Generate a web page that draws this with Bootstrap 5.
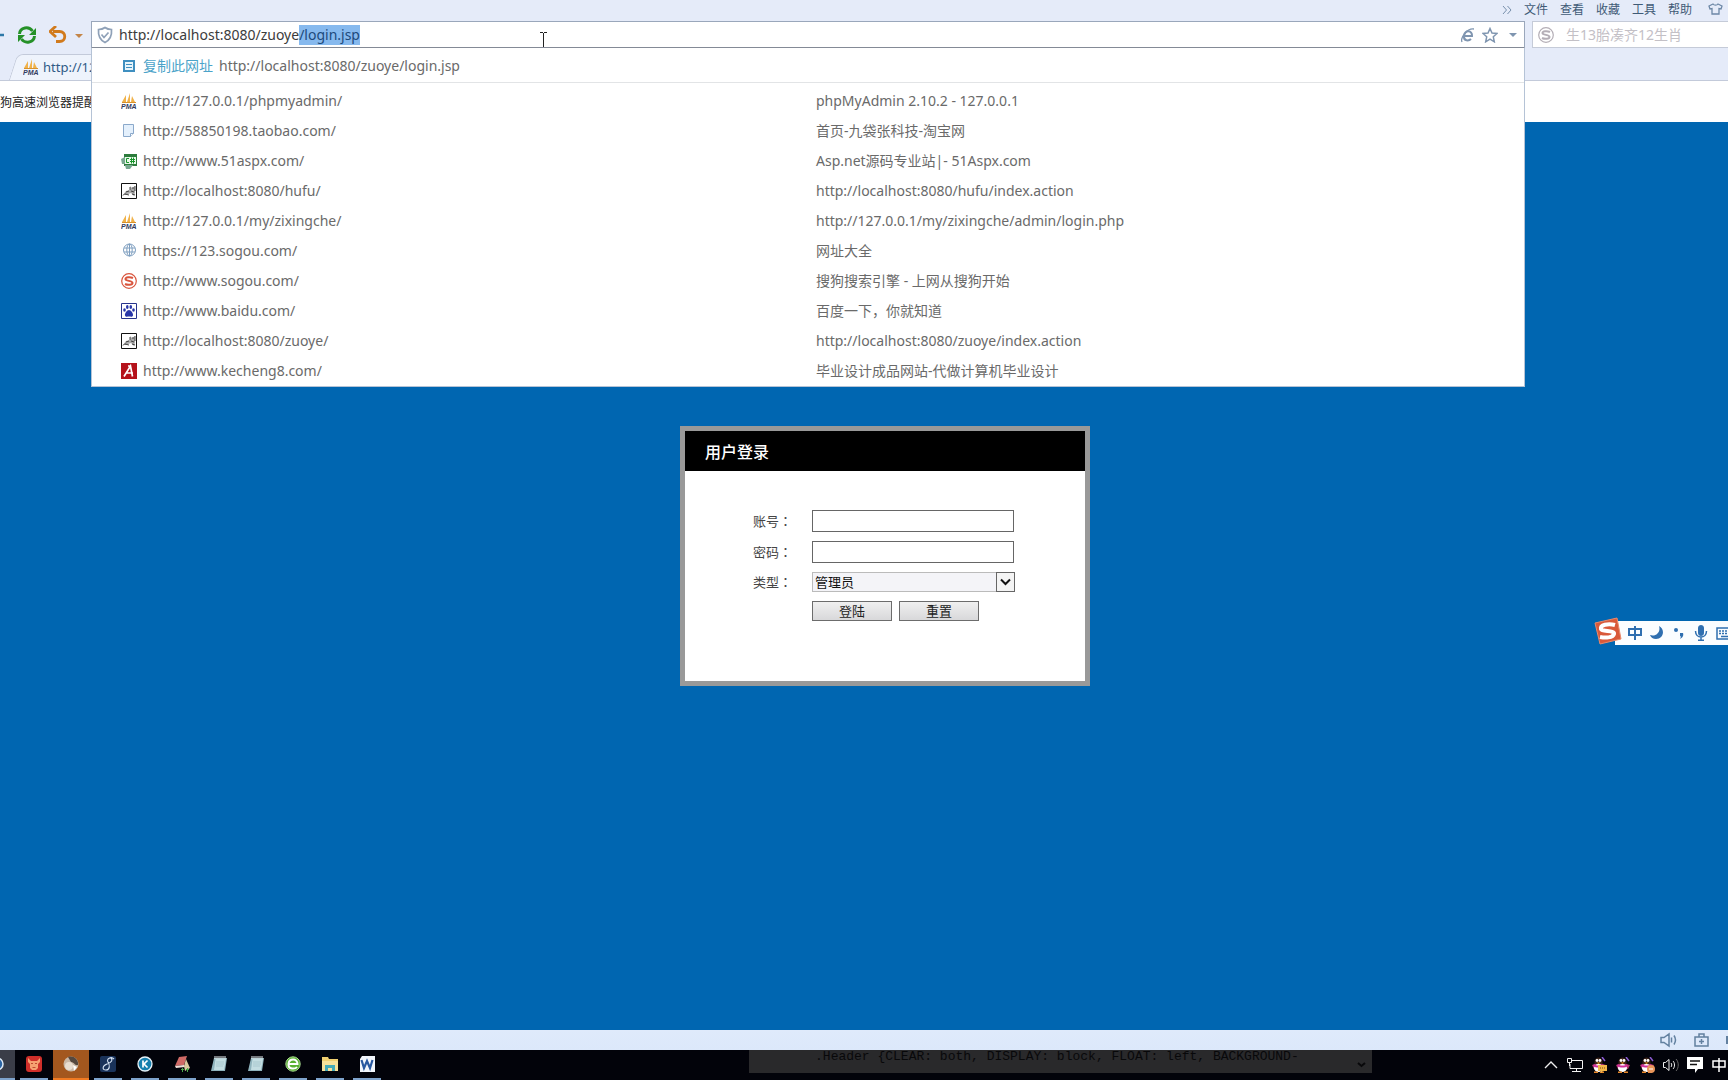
<!DOCTYPE html>
<html lang="zh-CN">
<head>
<meta charset="utf-8">
<title>用户登录</title>
<meta name="viewport" content="width=device-width, initial-scale=1">
<link href="https://cdn.jsdelivr.net/npm/bootstrap@5.3.0/dist/css/bootstrap.min.css" rel="stylesheet">
<style>
body{font-family:"Noto Sans","Noto Sans CJK SC",sans-serif;font-size:14px;line-height:20px;color:#6a6a6a;height:100vh;overflow:hidden;background:#0066b1}
svg{display:block;flex:none}
.chrome{background:#e5ebf9}
.menubar{height:21px;font-size:12px;line-height:20px;gap:12px;padding-right:5px}
.menubar a{color:#3f5a76;text-decoration:none}
.toolrow{height:27px}
.navbtns{width:91px}
.plain{border:0;background:none;padding:0}
.omnibox{background:#fff;border:1px solid #9aa7bb;border-bottom-color:#848a96;height:27px;margin-right:7px}
.url{color:#3c3c3c;white-space:pre;padding-left:5px}
.url span{background:#86b9ee;color:#1d4a7c;display:inline-block}
.findbox{width:196px;background:#fff;border:1px solid #c5cbd8;border-right:0;padding-left:5px}
.findbox input{border:0;background:none;outline:0;padding:0;width:150px;color:#bbb}
.findbox input::placeholder{color:#c3c0c6;opacity:1}
.suggest{position:absolute;top:100%;left:-1px;right:-1px;background:#fff;border:1px solid #b5c3d6;border-top:1px solid #848a96;z-index:5;height:340px}
.suggest a{color:#6a6a6a;text-decoration:none;height:30px;padding-left:29px}
.suggest .copyrow{height:35px;border-bottom:1px solid #e2e4e6;margin-bottom:3px;padding-top:2px;padding-left:30px}
.suggest .addr{width:695px;gap:6px;flex:none}
.copyrow b{color:#4ba3c9;font-weight:400;margin-right:6px}
.copyrow svg{margin-right:7px}
.tabrow{height:33px;border-bottom:1px solid #c3cada;padding-left:13px}
.tabitem{position:relative;z-index:0;height:26px;width:160px;padding-left:10px;font-size:13px;color:#2f5a86}
.tabitem::before{content:"";position:absolute;inset:0;z-index:-1;background:#eef3fc;border:1px solid #c3cada;border-bottom:0;border-radius:6px 0 0 0;transform:skewX(-18deg)}
.notice{height:41px;background:#fff;font-size:12px;color:#222;padding-top:3px}
.caretmark{position:absolute;left:445px;top:9px}
.stage{background:#0066b1;padding-left:42px}
.login{width:410px;border:5px solid #999;background:#fff;margin-top:304px;height:260px;color:#444;font-size:13px}
.login h1{background:#000;color:#fff;font-size:16px;font-weight:500;height:40px;line-height:42px;margin:0;padding-left:20px}
.login form{padding:39px 0 0 68px}
.login label{width:59px}
.mid{font-family:"Noto Sans CJK TC",sans-serif}
.login input{width:202px;height:22px;border:1px solid #666;padding:0 3px;background:#fff}
.login .line{height:22px;margin-bottom:9px}
.login .short{height:20px;margin-bottom:9px}
.login .btns{gap:7px;padding-left:59px}
.pick{width:203px;height:20px;border:1px solid #bbb;background:#f4f4f8;padding:0 2px;line-height:16px;color:#111;appearance:none;border-radius:0}
.pickarrow{position:absolute;right:0;top:0;width:19px;height:20px;border:1px solid #666;background:#f4f4f4;pointer-events:none}
.login button{width:80px;height:20px;border:1px solid #6c6c6c;background:linear-gradient(#f0f0f0,#d8d8da);padding:0;line-height:16px;color:#222}
.ime{position:absolute;right:0;top:621px;width:113px;height:24px;background:#fafdff;padding-left:13px;gap:8px}
.imelogo{position:absolute;left:-22px;top:-4px}
.status{height:20px;background:linear-gradient(#dfeafb,#dce8fa);gap:17px}
.taskbar{height:30px;background:#02030a}
.task{width:28px;margin-right:9px;height:30px;border-bottom:2px solid #7ea3cc}
.task.live{width:36px;margin:0 5px 0 -4px;background:#a3571e;border-color:#f07a22}
.task.edge{width:15px;margin-right:5px;background:#3a3d48}
.space-l{flex-grow:21}
.space-r{flex-grow:10}
.peek{width:623px;height:23px;background:#29292b;color:#08080a;font:13px/13px "Liberation Mono",monospace;white-space:pre;overflow:hidden;padding:0 6px 0 66px}
.tray{gap:8px;padding-right:1px}
</style>
</head>
<body class="d-flex flex-column">
<svg width="0" height="0" class="position-absolute">
<defs>
<symbol id="pma" viewBox="0 0 16 16"><path d="M5 2v7H1zM9 0v9H6zM11 3l3 6h-4z" fill="#f0b24a"/><path d="M1 9.500h14" stroke="#d8922c"/><text x="0" y="16" font-size="7" font-weight="700" font-style="italic" font-family="Liberation Sans" fill="#333b60">PMA</text></symbol>
<symbol id="page" viewBox="0 0 16 16"><path d="M2.500 1.500h10v9l-3 3h-7z" fill="#e4f0fc" stroke="#8ba9cb"/><path d="M12.500 10.500h-3v3" fill="#fff" stroke="#8ba9cb"/></symbol>
<symbol id="csharp" viewBox="0 0 16 16"><path d="M3 1h13v12H3z" fill="#2c7c3c"/><path d="M0 6l4-2v7H1zM4 12h8l-3 4H5z" fill="#78a890"/><path d="M4 4h11v7H4z" fill="#e8f8e8"/><path d="M8 5.500H5.500v4H8M10.500 4.500v6M12.500 4.500v6M9 6.500h5M9 8.500h5" stroke="#17962a" fill="none"/></symbol>
<symbol id="tomcat" viewBox="0 0 16 16"><path d="M.5.5h15v15H.5z" fill="#fff" stroke="#111"/><path d="M2 12l3-4 4-1V3l2 2 3-2v6l-1 4-3-3-3 1-2 1z" fill="#aaa"/><path d="M2 12.500l2-2M5 9l3-1M9 4v3M11 5h2M10 8l3 1M4 11l4 1M11 11l3 1M14 3v5" stroke="#444" fill="none"/></symbol>
<symbol id="globe" viewBox="0 0 16 16"><g fill="none" stroke="#7f9fc0"><circle cx="8.500" cy="7" r="6"/><ellipse cx="8.500" cy="7" rx="2.700" ry="6"/><path d="M3 5h11M3 9h11M8.500 1v12"/></g></symbol>
<symbol id="sring" viewBox="0 0 16 16"><circle cx="8" cy="8" r="7.300" fill="none" stroke="currentColor" stroke-width="1.200"/><path d="M12 5C9 3.600 4.500 4 4.500 6c0 2.300 7 1.500 7 4 0 2.200-5 2.300-7.500 1" fill="none" stroke="currentColor" stroke-width="2"/></symbol>
<symbol id="paw" viewBox="0 0 16 16"><path d="M.5.5h15v15H.5z" fill="#fff" stroke="#28348c"/><g fill="#2836a8"><ellipse cx="3.500" cy="7" rx="1.300" ry="1.800"/><ellipse cx="6.300" cy="4" rx="1.300" ry="1.900"/><ellipse cx="9.800" cy="4" rx="1.300" ry="1.900"/><ellipse cx="12.500" cy="7" rx="1.300" ry="1.800"/><path d="M8 7c2 0 4.500 3.500 4 5.500-.6 1.800-2.500 1-4 1s-3.400.8-4-1C3.500 10.500 6 7 8 7z"/></g></symbol>
<symbol id="reda" viewBox="0 0 16 16"><path d="M0 0h16v16H0z" fill="#b5121b"/><path d="M3 13.500L9.500 3l2 10.500M5 10h7M7 3h3" stroke="#fff" stroke-width="1.700" fill="none"/></symbol>
<symbol id="qq" viewBox="0 0 16 16"><path d="M3.500 5c0-6 8-6 8 0v3h-8z" fill="#3a2218"/><path d="M1 8l3-1h7l4 1-2 4H3z" fill="#b03a6a"/><ellipse cx="7.500" cy="11" rx="4.500" ry="4" fill="#fff"/><path d="M3 7c2 2 7 2 9 0l1 2c-3 2-8 2-11 0z" fill="#d02c9a"/><circle cx="6" cy="3.500" r="1.400" fill="#fff"/><circle cx="9" cy="3.500" r="1.400" fill="#fff"/><path d="M5.500 5.500h4l-2 1.500z" fill="#f5a623"/><path d="M3 15.300h4M9 15.300h4" stroke="#e8882a" stroke-width="1.400"/><path d="M11 0l3 4" stroke="#8a5ad0" stroke-width="1.500"/></symbol>
<symbol id="pad" viewBox="0 0 16 16"><path d="M3 2h13l-2 13H0z" fill="#8fb3bd"/><path d="M4.500 3H15l-2 11H3z" fill="#c3dde2"/><path d="M4 0v3M6 0v3M8 0v3M10 0v3M12 0v3M14 0v3" stroke="#e9f2f4"/><path d="M5 6h8M5 8h8M5 10h7" stroke="#a9c8cf"/></symbol>
</defs></svg>

<header class="chrome">
<nav class="menubar d-flex justify-content-end" aria-label="菜单">
<a href="#" aria-label="更多"><svg width="10" height="18" viewBox="0 0 10 18" fill="none" stroke="#7890ac"><path d="M1 6l3.500 4L1 14M5.500 6L9 10l-3.500 4"/></svg></a>
<a href="#">文件</a><a href="#">查看</a><a href="#">收藏</a><a href="#">工具</a><a href="#">帮助</a>
<a href="#" class="ps-1" aria-label="皮肤"><svg width="15" height="18" viewBox="0 0 15 18" fill="none" stroke="#6c87a6" stroke-width="1.300"><path d="M5 4L1 6l1 3 2-.5V14h7V8.500l2 .5 1-3-4-2c-1 1.500-4 1.500-5 0z"/></svg></a>
</nav>
<div class="toolrow d-flex">
<div class="navbtns d-flex align-items-center">
<svg width="5" height="18" class="me-auto"><path d="M0 9h4" stroke="#2d78a8" stroke-width="2.500"/></svg>
<button class="plain me-2" aria-label="刷新"><svg width="20" height="18" viewBox="0 0 20 18"><g fill="none" stroke="#259128" stroke-width="3"><path d="M2.500 8C3 1 12 0 15.500 5M17.500 10c-.5 7-9.500 8-13 3"/></g><path d="M19 2v7h-7zM1 16V9h7z" fill="#259128"/></svg></button>
<button class="plain ms-1 me-1" aria-label="撤销"><svg width="18" height="18" viewBox="0 0 18 18"><path d="M4 5.500h6.500c7 0 7 10 0 10H7" fill="none" stroke="#d17a1c" stroke-width="2.800"/><path d="M7 0L1 5.500 7 11" fill="none" stroke="#d17a1c" stroke-width="2.800"/></svg></button>
<button class="plain me-2 ps-1" aria-label="历史"><svg width="8" height="18"><path d="M0 8h8l-4 4z" fill="#c48548"/></svg></button>
</div>
<div class="omnibox position-relative flex-grow-1 d-flex align-items-center">
<svg class="ms-1" width="18" height="18" viewBox="0 0 18 18" fill="none" stroke="#8fa1b8" stroke-width="1.700"><path d="M9 1.500c2 1.500 4 2 6.500 2 .5 6-1.500 10.500-6.500 13C4 14 2 9.500 2.500 3.500 5 3.500 7 3 9 1.500z"/><path d="M5.500 8.500l2.500 3 4.500-5"/></svg>
<div class="url flex-grow-1">http://localhost:8080/zuoye<span>/login.jsp</span></div>
<svg class="me-2" width="13" height="16" viewBox="0 0 13 16" fill="none" stroke="#7f95b0" stroke-width="2"><path d="M3 9h8c.5-6-7-6.500-8 0-.6 5.500 5 5 7 3"/><path d="M1 15C-1 11 6 1 13 2" stroke-width="1.300"/></svg>
<svg width="16" height="16" viewBox="0 0 16 16" fill="none" stroke="#7f95b0" stroke-width="1.500"><path d="M8 1.500l2 4.500 5 .5-3.700 3.300 1 5L8 12.200l-4.300 2.600 1-5L1 6.500 6 6z"/></svg>
<svg class="ms-2 me-1" width="14" height="16"><path d="M3 6h8l-4 4z" fill="#7f95b0"/></svg>
<svg class="caretmark" width="13" height="18" viewBox="0 0 13 18" fill="none" stroke="#222"><path d="M3 1.500h3M7 1.500h3M6.500 2v14M3 16.500h3M7 16.500h3"/></svg>
<div class="suggest">
<div class="copyrow d-flex align-items-center"><svg width="14" height="14" viewBox="0 0 14 14"><path d="M2 2h10v10H2z" fill="#e8f5fb" stroke="#3f8fc0" stroke-width="2"/><path d="M4 5.500h6M4 8.500h6" stroke="#3f8fc0"/></svg><b>复制此网址</b><span>http://localhost:8080/zuoye/login.jsp</span></div>
<a href="#" class="d-flex align-items-center"><span class="addr d-flex align-items-center"><svg width="16" height="16"><use href="#pma"/></svg>http://127.0.0.1/phpmyadmin/</span>phpMyAdmin 2.10.2 - 127.0.0.1</a>
<a href="#" class="d-flex align-items-center"><span class="addr d-flex align-items-center"><svg width="16" height="16"><use href="#page"/></svg>http://58850198.taobao.com/</span>首页-九袋张科技-淘宝网</a>
<a href="#" class="d-flex align-items-center"><span class="addr d-flex align-items-center"><svg width="16" height="16"><use href="#csharp"/></svg>http://www.51aspx.com/</span>Asp.net源码专业站|- 51Aspx.com</a>
<a href="#" class="d-flex align-items-center"><span class="addr d-flex align-items-center"><svg width="16" height="16"><use href="#tomcat"/></svg>http://localhost:8080/hufu/</span>http://localhost:8080/hufu/index.action</a>
<a href="#" class="d-flex align-items-center"><span class="addr d-flex align-items-center"><svg width="16" height="16"><use href="#pma"/></svg>http://127.0.0.1/my/zixingche/</span>http://127.0.0.1/my/zixingche/admin/login.php</a>
<a href="#" class="d-flex align-items-center"><span class="addr d-flex align-items-center"><svg width="16" height="16"><use href="#globe"/></svg>https://123.sogou.com/</span>网址大全</a>
<a href="#" class="d-flex align-items-center"><span class="addr d-flex align-items-center"><svg width="16" height="16" color="#d9543c"><use href="#sring"/></svg>http://www.sogou.com/</span>搜狗搜索引擎 - 上网从搜狗开始</a>
<a href="#" class="d-flex align-items-center"><span class="addr d-flex align-items-center"><svg width="16" height="16"><use href="#paw"/></svg>http://www.baidu.com/</span>百度一下，你就知道</a>
<a href="#" class="d-flex align-items-center"><span class="addr d-flex align-items-center"><svg width="16" height="16"><use href="#tomcat"/></svg>http://localhost:8080/zuoye/</span>http://localhost:8080/zuoye/index.action</a>
<a href="#" class="d-flex align-items-center"><span class="addr d-flex align-items-center"><svg width="16" height="16"><use href="#reda"/></svg>http://www.kecheng8.com/</span>毕业设计成品网站-代做计算机毕业设计</a>
</div>
</div>
<div class="findbox d-flex align-items-center"><svg class="me-2" width="16" height="16" color="#b4aeb6"><use href="#sring"/></svg><input class="ms-1" type="text" aria-label="搜索" placeholder="生13胎凑齐12生肖"></div>
</div>
<div class="tabrow d-flex align-items-end"><div class="tabitem d-flex align-items-center"><svg class="me-1" width="16" height="16"><use href="#pma"/></svg>http://127.0.0.1</div></div>
</header>
<div class="notice d-flex align-items-center">狗高速浏览器提醒您</div>

<main class="stage flex-grow-1 d-flex justify-content-center align-items-start">
<section class="login">
<h1>用户登录</h1>
<form>
<div class="line d-flex align-items-center"><label for="acc">账号<span class="mid" lang="zh-TW">：</span></label><input id="acc" type="text"></div>
<div class="line d-flex align-items-center"><label for="pwd">密码<span class="mid" lang="zh-TW">：</span></label><input id="pwd" type="password"></div>
<div class="short d-flex align-items-center"><label for="role">类型<span class="mid" lang="zh-TW">：</span></label><div class="position-relative"><select id="role" class="pick d-block"><option>管理员</option></select><svg class="pickarrow" viewBox="0 0 17 18"><path d="M4 6.500l4.500 4.500L13 6.500" fill="none" stroke="#111" stroke-width="2"/></svg></div></div>
<div class="short btns d-flex align-items-center"><button type="button">登陆</button><button type="reset">重置</button></div>
</form>
</section>
</main>

<aside class="ime d-flex align-items-center">
<svg class="imelogo" width="30" height="30" viewBox="0 0 30 30"><path d="M2 6L24 1l4 21L7 27z" fill="#d9593a" stroke="#e88a6c"/><path d="M22 8C15 6 7 8 8 12c1 3 14 1 13 5-1 4-9 4-14 3" fill="none" stroke="#fff" stroke-width="4"/></svg>
<svg width="14" height="16" viewBox="0 0 14 16" fill="none" stroke="#2f6fb0" stroke-width="2"><path d="M1 4h12v6H1zM7 1v14"/></svg>
<svg width="14" height="16" viewBox="0 0 14 16"><path d="M9 1c7 4 4 13-3 13-3 0-5-1.500-6-4 6 2 11-3 9-9z" fill="#2f6fb0"/></svg>
<svg width="14" height="16" viewBox="0 0 14 16" fill="#2f6fb0"><circle cx="4" cy="5" r="2"/><path d="M8 8h3c1 3-1 5-3 6 1-2 1-3 0-3z"/></svg>
<svg width="14" height="16" viewBox="0 0 14 16"><path d="M4 3c0-4 6-4 6 0v5c0 4-6 4-6 0z" fill="#2f6fb0"/><path d="M1.500 6c0 8 11 8 11 0M7 12v3M4 15.300h6" fill="none" stroke="#2f6fb0" stroke-width="1.500"/></svg>
<svg width="18" height="16" viewBox="0 0 18 16" fill="none" stroke="#2f6fb0"><path d="M1 3h16v11H1z" stroke-width="1.500"/><path d="M3 6h12M3 8.500h12" stroke-dasharray="2 1" stroke-width="1.500"/><path d="M5 11.500h8" stroke-width="1.500"/></svg>
</aside>

<footer>
<div class="status d-flex justify-content-end align-items-center">
<svg width="17" height="16" viewBox="0 0 17 16" fill="none" stroke="#62809f" stroke-width="1.500"><path d="M1 5.500h3L9 2v12L4 10.500H1zM11.500 5.500v5M14 3.500c2 3 2 6 0 9"/></svg>
<svg width="15" height="16" viewBox="0 0 15 16" fill="none" stroke="#62809f" stroke-width="1.500"><path d="M1 5h13v9H1zM5 5V2h5v3M7.500 7v5M5 9.500h5"/></svg>
<svg width="2" height="16"><path d="M0 4h2v8H0z" fill="#62809f"/></svg>
</div>
<div class="taskbar d-flex align-items-center">
<div class="task edge d-flex align-items-center"><svg width="5" height="16" viewBox="0 0 5 16"><circle cx="-3" cy="8" r="6" fill="#2a64a4" stroke="#dce8f4" stroke-width="1.500"/></svg></div>
<div class="task d-flex align-items-center justify-content-center"><svg width="16" height="16" viewBox="0 0 16 16"><rect width="16" height="16" rx="3" fill="#cf2f2a"/><path d="M2 2l3 3h6l3-3v4l-2 2v4l-2 2H6l-2-2V8L2 6z" fill="#f6a071"/><path d="M5 7.500h2M9 7.500h2M6.500 11.500h3" stroke="#c04a30"/></svg></div>
<div class="task live d-flex align-items-center justify-content-center"><svg width="16" height="16" viewBox="0 0 16 16"><circle cx="8" cy="8" r="7.500" fill="#c9b7a5"/><path d="M5 1c6-2 11 3 10 8-3 1-4-3-7-3z" fill="#55483f"/><circle cx="6" cy="10" r="4" fill="#e8ddd0"/><path d="M10 9l4 2-3 4z" fill="#fff"/></svg></div>
<div class="task d-flex align-items-center justify-content-center"><svg width="16" height="16" viewBox="0 0 16 16"><rect width="16" height="16" rx="2" fill="#1a335a"/><path d="M14 3C11 0 6 3 8 6s2 8-2 8-4-4 1-6 6-4 4-6" fill="none" stroke="#d6e4f4" stroke-width="1.100"/></svg></div>
<div class="task d-flex align-items-center justify-content-center"><svg width="16" height="16" viewBox="0 0 16 16"><circle cx="8" cy="8" r="7" fill="#1780ae" stroke="#e8f4fa" stroke-width="1.300"/><path d="M6 4.500v7M10.500 4.500L7 8l3.500 3.500" fill="none" stroke="#fff" stroke-width="1.700"/></svg></div>
<div class="task d-flex align-items-center justify-content-center"><svg width="16" height="16" viewBox="0 0 16 16"><path d="M5 1l8-1-3 9-9 1z" fill="#cf6a66"/><path d="M1 10l9-1 1 2-9 1z" fill="#f0e0da"/><path d="M12 3l4 9-5 3-1-5z" fill="#d9c9a0"/><path d="M7 13.500h3M12 13.500h3M8.500 12v4M13.500 12v4" stroke="#4aa84a"/></svg></div>
<div class="task d-flex align-items-center justify-content-center"><svg width="16" height="16"><use href="#pad"/></svg></div>
<div class="task d-flex align-items-center justify-content-center"><svg width="16" height="16"><use href="#pad"/></svg></div>
<div class="task d-flex align-items-center justify-content-center"><svg width="16" height="16" viewBox="0 0 16 16"><circle cx="8" cy="8" r="7.200" fill="#58b030" stroke="#a8d890"/><path d="M3.500 8h9c0-6-8.500-6-9 0s7 5 8.500 3" fill="none" stroke="#fff" stroke-width="2"/></svg></div>
<div class="task d-flex align-items-center justify-content-center"><svg width="16" height="16" viewBox="0 0 16 16"><path d="M0 1h6l1 2h9v12H0z" fill="#f0cf70"/><path d="M0 5h16v10H0z" fill="#f8e19a"/><path d="M3 15V9h10v6h-3v-3H6v3z" fill="#45aab8"/></svg></div>
<div class="task d-flex align-items-center justify-content-center"><svg width="16" height="16" viewBox="0 0 16 16"><path d="M3 0h13v16H1V3z" fill="#f2f6fb"/><path d="M2.500 4L5 12l3-7 3 7 2.500-8" fill="none" stroke="#2858a0" stroke-width="2.200"/></svg></div>
<div class="space-l"></div>
<div class="peek align-self-start d-flex justify-content-between"><span>.Header {CLEAR: both, DISPLAY: block, FLOAT: left, BACKGROUND-</span><svg width="9" height="24"><path d="M1 13l3.500 3L8 13" fill="none" stroke="#08080a" stroke-width="2"/></svg></div>
<div class="space-r"></div>
<div class="tray d-flex align-items-center">
<svg width="16" height="16" viewBox="0 0 16 16" fill="none" stroke="#eee" stroke-width="1.400"><path d="M2 11l6-6 6 6"/></svg>
<svg width="16" height="16" viewBox="0 0 16 16" fill="none" stroke="#f2f2f2"><path d="M5 3.500h10.500v8H3V7M9.500 12v3M5 14.500h9M.5 1.500h4v4h-4zM2.500 5.500V9"/></svg>
<svg width="16" height="16" viewBox="0 0 16 16"><use href="#qq"/><path d="M7 8h9v6h-4l-2 2v-2H7z" fill="#f2b84a"/><path d="M9 11h5" stroke="#7a4a10" stroke-dasharray="1 1"/></svg>
<svg width="16" height="16"><use href="#qq"/></svg>
<svg width="16" height="16" viewBox="0 0 16 16"><use href="#qq"/><circle cx="12" cy="12" r="4" fill="#e8955a"/><path d="M10 12h4" stroke="#fff"/></svg>
<svg width="16" height="16" viewBox="0 0 16 16" fill="none" stroke="#eee"><path d="M.5 5.500h2L6 2.500v11l-3.500-3h-2zM8 6c1 1 1 3 0 4M10 4c2 2 2 6 0 8"/><path d="M13 2c3 3 3 9 0 12" stroke="#666"/></svg>
<svg width="16" height="16" viewBox="0 0 16 16"><path d="M0 0h16v12h-5l-3 4v-4H0z" fill="#fff"/><path d="M3 4h10M3 7.500h7" stroke="#111" stroke-width="1.500"/></svg>
<svg width="16" height="16" viewBox="0 0 16 16" fill="none" stroke="#fff" stroke-width="1.500"><path d="M2 4h12v6H2zM8 1v14"/></svg>
</div>
</div>
</footer>
<script src="https://cdn.jsdelivr.net/npm/bootstrap@5.3.0/dist/js/bootstrap.bundle.min.js"></script>
</body>
</html>
